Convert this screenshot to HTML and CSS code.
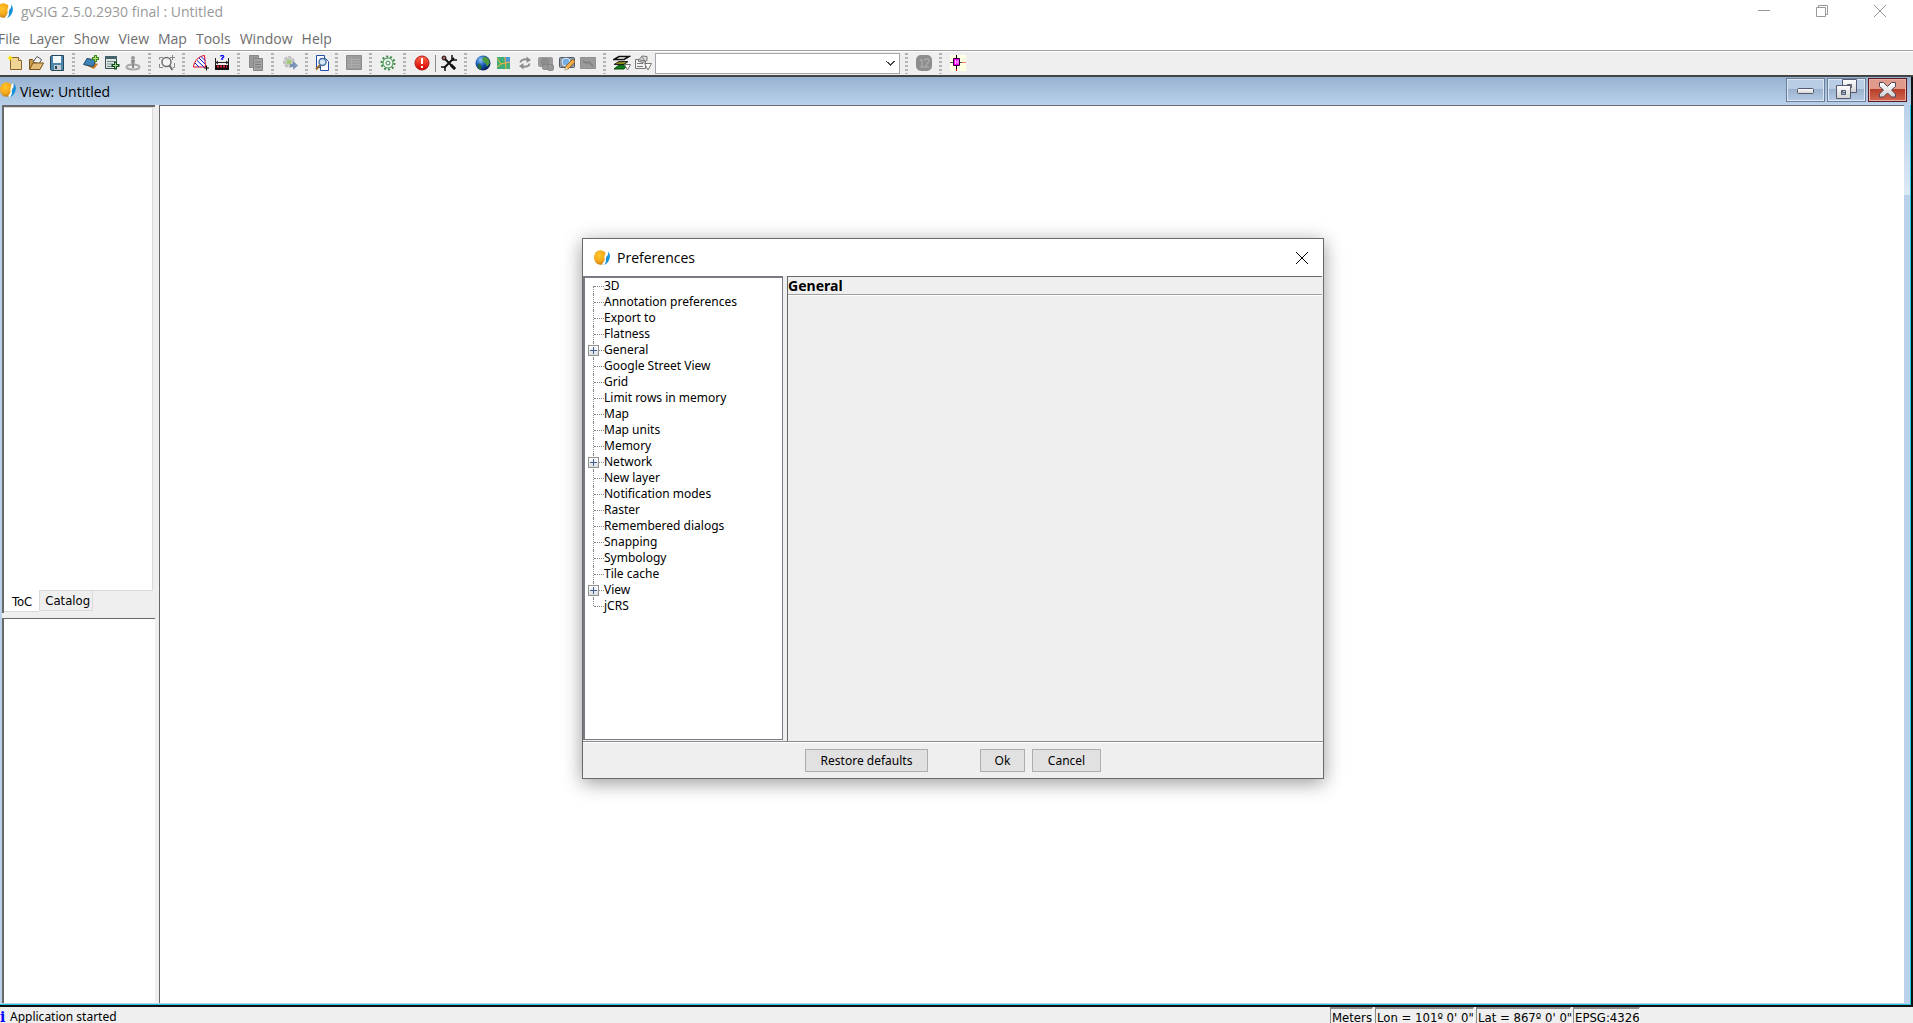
FILE: index.html
```html
<!DOCTYPE html>
<html lang="en">
<head>
<meta charset="utf-8">
<title>gvSIG 2.5.0.2930 final : Untitled</title>
<link rel="stylesheet" href="styles.css">
</head>
<body>
<svg class="defs" aria-hidden="true">
  <defs>
    <radialGradient id="sun" cx=".4" cy=".35" r=".7"><stop offset="0" stop-color="#ffc629"/><stop offset=".6" stop-color="#f5a81c"/><stop offset="1" stop-color="#b87412"/></radialGradient>
    <radialGradient id="sea" cx=".35" cy=".3" r=".8"><stop offset="0" stop-color="#8cc8f4"/><stop offset=".5" stop-color="#1450b4"/><stop offset="1" stop-color="#031442"/></radialGradient>
    <linearGradient id="red" x1="0" y1="0" x2="0" y2="1"><stop offset="0" stop-color="#ff6a4a"/><stop offset="1" stop-color="#d40000"/></linearGradient>
    <linearGradient id="glyph" x1="0" y1="0" x2="0" y2="1"><stop offset="0" stop-color="#fff"/><stop offset="1" stop-color="#d2d2d2"/></linearGradient>
    <symbol id="logo" viewBox="0 0 16 16"><ellipse cx="6.500" cy="7.500" rx="6.500" ry="7.300" fill="url(#sun)"/><path d="M12 2c1.500 2-1.500 4-.5 6.500.8 2-.8 4-2.500 6" fill="none" stroke="#fff" stroke-width="2"/><path d="M14 1.500c2.500 2.500 2.300 6 .8 9-1 2-2.500 3.500-4.800 4.500 2.200-2.300 2-4 1.800-5.800C11.500 7 15.200 5 14 1.500z" fill="#1592dc"/></symbol>
  </defs>
</svg>

<header class="titlebar">
  <svg class="app-logo" viewBox="0 0 16 16"><use href="#logo"/></svg>
  <h1 class="app-title">gvSIG 2.5.0.2930 final : Untitled</h1>
  <button class="os-btn" aria-label="Minimize"><svg viewBox="0 0 12 12"><path d="M0 5.500h12"/></svg></button>
  <button class="os-btn" aria-label="Restore"><svg viewBox="0 0 12 12"><path d="M.5 2.500h9v9h-9zM2.500 2.500v-2h9v9h-2"/></svg></button>
  <button class="os-btn" aria-label="Close"><svg viewBox="0 0 12 12"><path d="M0 0l12 12M12 0L0 12"/></svg></button>
</header>

<nav class="menubar">
  <button>File</button><button>Layer</button><button>Show</button><button>View</button><button>Map</button><button>Tools</button><button>Window</button><button>Help</button>
</nav>

<div class="toolbar">
  <button class="tool" aria-label="New"><svg viewBox="0 0 16 16"><path d="M3.500 2.500h8l3 3v9h-11z" fill="#f0d494" stroke="#8a6428"/><path d="M11.500 2.500v3h3" fill="#fff" stroke="#8a6428"/><path d="M3 0l1 2 2 1-2 1-1 2-1-2-2-1 2-1z" fill="#ffe300"/></svg></button>
  <button class="tool" aria-label="Open"><svg viewBox="0 0 16 16"><path d="M1.500 14V4.500h3l1 1h4V13z" fill="#c79a50" stroke="#7a5418"/><path d="M5 7l4-5.500 4.500 3L11 9z" fill="#f4f4f4" stroke="#555"/><path d="M1.500 14.500L5 8h10.500L12 14.500z" fill="#e3bd78" stroke="#7a5418"/></svg></button>
  <button class="tool" aria-label="Save"><svg viewBox="0 0 16 16"><path d="M2.500.5h12v15h-12l-1-1v-13z" fill="#4a86ac" stroke="#26465c"/><path d="M4 1h8v7H4z" fill="#f4f8fa"/><path d="M5 10h7v5H5z" fill="#c9ced2"/><path d="M6 11h2v3H6z" fill="#26465c"/></svg></button>
  <i class="grip"></i>
  <button class="tool" aria-label="Add layer"><svg viewBox="0 0 16 16"><path d="M2 10l9 4 4-5-9-3z" fill="#c27a22"/><path d="M.5 9.500L4 3.500l9 1.500-3 6.500z" fill="#3e84b8" stroke="#1d4768"/><path d="M12.500 0v7M9 3.500h7" stroke="#3a8a1c" stroke-width="3"/><path d="M12.500 1v5M10 3.500h5" stroke="#b6e07c"/></svg></button>
  <button class="tool" aria-label="Add table"><svg viewBox="0 0 16 16"><path d="M1.500 1.500h11v12h-11z" fill="#dde6e2" stroke="#3a4c50"/><path d="M1 1h12v3H1z" fill="#45646c"/><path d="M3 6.500h8M3 9h6M3 11.500h5" stroke="#6e8c88"/><path d="M11.500 6.500v8M7.500 10.500h8" stroke="#184c20" stroke-width="3"/><path d="M11.500 8v5M9 10.500h5" stroke="#9cdc98"/></svg></button>
  <button class="tool" aria-label="Add event layer" disabled><svg viewBox="0 0 16 16"><circle cx="8" cy="3" r="2" fill="#999"/><path d="M6 5h4l-1 6H7z" fill="#8a8a8a"/><ellipse cx="8" cy="12" rx="6.500" ry="2.500" fill="none" stroke="#aaa" stroke-width="2"/><path d="M7 9h2v4H7z" fill="#888"/></svg></button>
  <i class="grip"></i>
  <button class="tool" aria-label="Zoom"><svg viewBox="0 0 16 16"><path d="M.5 4.500v-2H4M.5 9v3.500H4M15.500 8v4.500H14" stroke="#888" fill="none"/><circle cx="7.500" cy="7" r="4.500" fill="#f4f4f4" stroke="#707070" stroke-width="1.500"/><path d="M10.500 10.500l3 4.500" stroke="#707070" stroke-width="2"/><path d="M13.500 0v5M11 2.500h5" stroke="#888"/></svg></button>
  <i class="grip"></i>
  <button class="tool" aria-label="Measure area"><svg viewBox="0 0 16 16"><path d="M.5 12C1 6 6 1 11.500.5L12.500 12z" fill="#fff" stroke="#e00020"/><path d="M2 8l4 4M4 5.500l7 6.500M6 3l6 6M8 1.500l4 4" stroke="#1414d8"/><path d="M13.500 10.500v5M11 13h5" stroke="#000"/></svg></button>
  <button class="tool" aria-label="Measure distance"><svg viewBox="0 0 16 16"><path d="M1.500 3v7M14.500 3v7M2 7.500h12" stroke="#222"/><path d="M4 6L2 7.500 4 9M12 6l2 1.500-2 1.500" stroke="#222" fill="none"/><path d="M6.500 1.500c1-2 3.500-1 3 .5L8 3.500V5" stroke="#1414ff" fill="none" stroke-width="1.500"/><path d="M1 10h14v5H1z" fill="#111"/><path d="M3 11.500h10" stroke="#f02030" stroke-width="2" stroke-dasharray="2 1"/></svg></button>
  <i class="grip"></i>
  <button class="tool" aria-label="Copy" disabled><svg viewBox="0 0 16 16"><path d="M1.500.5h9v12h-9z" fill="#999" stroke="#8a8a8a"/><path d="M5.500 3.500h9v12h-9z" fill="#a4a4a4" stroke="#858585"/><path d="M7 7h6M7 9.500h6M7 12h6" stroke="#7c7c7c"/></svg></button>
  <i class="grip"></i>
  <button class="tool" aria-label="Geoprocess"><svg viewBox="0 0 16 16"><circle cx="7" cy="7" r="4.500" fill="#d4d6d4" stroke="#c0c0c0" stroke-width="3" stroke-dasharray="3 1"/><circle cx="7" cy="7" r="2.500" fill="#a2c878"/><path d="M8 9h3V6l5 4.500-5 4.500v-3H8z" fill="#6b86b4" opacity=".85"/></svg></button>
  <i class="grip"></i>
  <button class="tool narrow" aria-label="Find"><svg viewBox="0 0 16 16"><path d="M2.500.5h8v12h-8z" fill="#fff" stroke="#1f4fa8"/><path d="M6.500 3.500h5l3 3v9h-8z" fill="#fff" stroke="#1f4fa8"/><circle cx="8.500" cy="7" r="3.500" fill="#d6e8f8" stroke="#4c74a4" stroke-width="1.500"/><path d="M6 10l-4 4.500" stroke="#9a6a30" stroke-width="2"/></svg></button>
  <i class="grip"></i>
  <button class="tool" aria-label="Table" disabled><svg viewBox="0 0 16 16"><path d="M.5.500h15v14H.5z" fill="#9c9c9c" stroke="#8c8c8c"/><path d="M2 4.500h12M2 7h12M2 9.500h12M2 12h12M5.500 3v10" stroke="#acacac"/></svg></button>
  <i class="grip"></i>
  <button class="tool" aria-label="Toolbox"><svg viewBox="0 0 16 16"><circle cx="8" cy="8" r="6.500" fill="none" stroke="#3a8b46" stroke-width="2" stroke-dasharray="2 2"/><circle cx="8" cy="8" r="5" fill="#f2f6f2" stroke="#3a8b46"/><circle cx="8" cy="8" r="2" fill="none" stroke="#3a8b46"/></svg></button>
  <i class="grip"></i>
  <button class="tool" aria-label="Errors"><svg viewBox="0 0 16 16"><circle cx="8" cy="8" r="7" fill="url(#red)" stroke="#b01818"/><path d="M8 3v6M8 11v2" stroke="#fff" stroke-width="2"/></svg></button>
  <i class="divider"></i>
  <button class="tool" aria-label="Tools"><svg viewBox="0 0 16 16"><path d="M3 3l11 11M13 3L3 13" stroke="#111" stroke-width="2"/><path d="M11 0v4l1 1h4M0 12h3l1 1v3" stroke="#111" fill="none" stroke-width="1.500"/><circle cx="3" cy="3" r="2" fill="#b06068" stroke="#111"/><path d="M10 10l4 4" stroke="#111" stroke-width="3"/></svg></button>
  <i class="grip"></i>
  <button class="tool" aria-label="Globe"><svg viewBox="0 0 16 16"><circle cx="8" cy="8" r="7.500" fill="url(#sea)"/><path d="M9 1.500c4 .5 6 4 5.500 7l-2 3c-2-1-1-3-3-4s-1-2-2.500-3z" fill="#4c9a38"/><path d="M3 8l4 3-1 4c-3-1-4-4-3-7z" fill="#2c6c3c"/></svg></button>
  <button class="tool" aria-label="Map"><svg viewBox="0 0 16 16"><path d="M1 2h13v12H1z" fill="#3fae78"/><path d="M8 2h6v6L9 9z" fill="#4c98d0"/><path d="M1 3l4 6-4 3M5 9l9-2M9 2l1 12" stroke="#f5b53c" fill="none"/></svg></button>
  <button class="tool" aria-label="Refresh" disabled><svg viewBox="0 0 16 16"><path d="M3.500 7.500c0-2.500 3-3.500 7-3M12.500 8.500c0 2.500-3 3.500-7 3" fill="none" stroke="#8e8e8e" stroke-width="2"/><path d="M9.500 1.500L14 5l-4.500 3zM6.500 8L2 11l4.500 3.500z" fill="#8e8e8e"/></svg></button>
  <button class="tool" aria-label="Link" disabled><svg viewBox="0 0 16 16"><rect x="0" y="2" width="15" height="10" rx="2" fill="#9a9a9a"/><circle cx="7" cy="7" r="4" fill="#8c8c8c"/><rect x="4.500" y="9.500" width="6" height="5" rx="2" fill="#999" stroke="#828282"/><rect x="9.500" y="9.500" width="6" height="6" rx="2" fill="#999" stroke="#828282"/></svg></button>
  <button class="tool" aria-label="Edit picture"><svg viewBox="0 0 16 16"><rect x=".5" y="2.500" width="15" height="10" rx="1" fill="#8c98a4" stroke="#505a64"/><circle cx="7" cy="7" r="4" fill="#74aee4" stroke="#dce8f4"/><path d="M6 15l1-4 7-7 2 3-7 7z" fill="#f2b04c" stroke="#a06a20"/><path d="M6 15l1-3 2 2z" fill="#eee"/></svg></button>
  <button class="tool" aria-label="Picture" disabled><svg viewBox="0 0 16 16"><path d="M.5 2.500h15v11H.5z" fill="#9a9a9a" stroke="#909090"/><path d="M3 6l3 2 3-1 4 4" stroke="#7c7c7c" fill="none" stroke-width="1.500"/></svg></button>
  <i class="grip"></i>
  <button class="tool wide" aria-label="Layers"><svg viewBox="0 0 18 16"><path d="M1 14l5-4h9l-4 4z" fill="#0c7a18" stroke="#064a0c"/><path d="M1 9.500l5-3h9l-4 3z" fill="#8a8a18" stroke="#222"/><path d="M1 4.500l5-3h10l-5 3z" fill="#fff" stroke="#111" stroke-width="1.500"/><path d="M11.500 9.500h6L14.500 15z" fill="#fff" stroke="#777"/></svg></button>
  <button class="tool wide" aria-label="Layer properties"><svg viewBox="0 0 18 16"><path d="M1.500 4.500h10v9h-10z" fill="#f4f4f4" stroke="#777"/><path d="M3 8.500h6M3 11.500h6M4 6l4-5 5 .5v4l-4 2z" stroke="#777" fill="#ddd"/><path d="M6 5l5 1M8 2l3 4" stroke="#777"/><path d="M10.500 8.500h7L14 15z" fill="#fff" stroke="#777"/></svg></button>
  <select class="combo" aria-label="Active layer"><option></option></select>
  <i class="grip"></i>
  <button class="tool" aria-label="Information" disabled><svg viewBox="0 0 16 16"><rect width="16" height="16" rx="5" fill="#8d8d8d"/><path d="M4 5h2v7M4 12h4M9 6c0-3 4-3 4 0l-4 6h4" stroke="#a8a8a8" fill="none" stroke-width="1.500"/></svg></button>
  <i class="grip"></i>
  <button class="tool" aria-label="Center on point"><svg viewBox="0 0 16 16"><path d="M0 0h16v16H0z" fill="#ffffe1"/><path d="M6.500 0v14" stroke="#000"/><path d="M6.500 14v2" stroke="#d00"/><path d="M0 7.500h12" stroke="#555"/><path d="M12 7.500h4" stroke="#e88070"/><path d="M3.500 3.500h6v7h-6z" fill="#f0f" stroke="#303"/><path d="M5.500 5v4M8 5v4M5.500 7H8" stroke="#fbf"/></svg></button>
</div>

<main class="frame">
  <div class="frame-title">
    <svg class="app-logo" viewBox="0 0 16 16"><use href="#logo"/></svg>
    <h2>View: Untitled</h2>
    <button class="mdi" aria-label="Minimize view"><svg viewBox="0 0 39 24"><rect x="11.500" y="10.500" width="16" height="5" rx="1" fill="url(#glyph)" stroke="#555a70"/></svg></button>
    <button class="mdi" aria-label="Restore view"><svg viewBox="0 0 39 24"><path d="M15.500 1.500h14v13h-14zM20.500 6.500v3h4v-3z" fill="url(#glyph)" stroke="#555a70" fill-rule="evenodd"/><path d="M9.500 7.500h14v13h-14zM14.500 12.500v4h4v-4z" fill="url(#glyph)" stroke="#555a70" fill-rule="evenodd"/></svg></button>
    <button class="mdi close" aria-label="Close view"><svg viewBox="0 0 39 24"><path d="M11.500 4.500h4l4 4 4-4h4v4l-4 3.500 4 4v3h-4l-4-4-4 4h-4v-3l4-4-4-3.500z" fill="url(#glyph)" stroke="#50465a"/></svg></button>
  </div>
  <div class="frame-body">
    <aside class="side">
      <section class="toc">
        <div class="toc-pane"></div>
        <div class="tabs"><button class="tab active">ToC</button><button class="tab">Catalog</button></div>
      </section>
      <section class="locator"></section>
    </aside>
    <section class="map"></section>
  </div>
</main>

<footer class="status">
  <b class="info">i</b>
  <span class="message">Application started</span>
  <span class="cell units">Meters</span>
  <span class="cell lon">Lon = 101º 0' 0"</span>
  <span class="cell lat">Lat = 867º 0' 0"</span>
  <span class="cell epsg">EPSG:4326</span>
</footer>

<section class="dialog" role="dialog" aria-labelledby="dlg-title">
  <div class="dialog-title">
    <svg class="app-logo" viewBox="0 0 16 16"><use href="#logo"/></svg>
    <h2 id="dlg-title">Preferences</h2>
    <button class="dialog-close" aria-label="Close"><svg viewBox="0 0 12 12"><path d="M0 0l12 12M12 0L0 12"/></svg></button>
  </div>
  <div class="dialog-body">
    <ul class="tree">
      <li>3D</li>
      <li>Annotation preferences</li>
      <li>Export to</li>
      <li>Flatness</li>
      <li><button class="expand" aria-label="Expand General"></button>General</li>
      <li>Google Street View</li>
      <li>Grid</li>
      <li>Limit rows in memory</li>
      <li>Map</li>
      <li>Map units</li>
      <li>Memory</li>
      <li><button class="expand" aria-label="Expand Network"></button>Network</li>
      <li>New layer</li>
      <li>Notification modes</li>
      <li>Raster</li>
      <li>Remembered dialogs</li>
      <li>Snapping</li>
      <li>Symbology</li>
      <li>Tile cache</li>
      <li><button class="expand" aria-label="Expand View"></button>View</li>
      <li>jCRS</li>
    </ul>
    <div class="page"><h3>General</h3></div>
  </div>
  <div class="actions">
    <button class="push restore">Restore defaults</button>
    <button class="push ok">Ok</button>
    <button class="push cancel">Cancel</button>
  </div>
</section>
</body>
</html>
```
FILE: styles.css
```css
* { box-sizing: border-box; }
body {
  margin: 0;
  height: 100vh;
  overflow: hidden;
  display: flex;
  flex-direction: column;
  position: relative;
  background: #fff;
  color: #000;
  font: 12px/16px "Noto Sans", sans-serif;
}
h1, h2, h3, ul { margin: 0; padding: 0; font-weight: normal; }
button { font: inherit; color: inherit; padding: 0; margin: 0; border: 0; background: none; }
svg { display: block; }
.defs { position: absolute; width: 0; height: 0; }
.app-logo { width: 16px; height: 16px; flex: none; }

.titlebar { display: flex; align-items: flex-start; height: 24px; padding-right: 4px; color: #999; flex: none; }
.titlebar .app-logo { margin: 3px 8px 0 -3px; }
.app-title { flex: 1; font: 14px/24px "Open Sans", sans-serif; }
.os-btn { width: 58px; height: 22px; display: grid; place-items: center; }
.os-btn svg { width: 12px; height: 12px; fill: none; stroke: #999; }

.menubar { display: flex; gap: 9px; height: 26px; margin-left: -2px; padding-top: 3px; flex: none; color: #6d6d6d; font: 14px/24px "Open Sans", sans-serif; }

.toolbar { display: flex; align-items: center; height: 27px; padding-left: 4px; flex: none; background: #efefef; border-top: 1px solid #a0a0a0; border-bottom: 2px solid #444; box-shadow: inset 0 1px #fff; }
.tool { width: 21px; height: 22px; display: grid; place-items: center; flex: none; }
.tool.narrow { width: 17px; }
.tool svg { width: 16px; height: 16px; }
.tool.wide svg { width: 18px; }
.grip { width: 3px; height: 21px; margin: 0 5px; background: repeating-linear-gradient(#b4b4b4 0 2px, transparent 2px 4px); flex: none; }
.divider { width: 1px; height: 17px; margin: 0 2px 0 3px; background: #888; flex: none; }
.combo {
  appearance: none;
  width: 245px;
  height: 21px;
  margin-left: 2px;
  border: 1px solid #a5a5ad;
  border-radius: 0;
  background-color: #fff;
  background-image: linear-gradient(45deg, transparent 44%, #444 44% 60%, transparent 60%), linear-gradient(-45deg, transparent 44%, #444 44% 60%, transparent 60%);
  background-size: 5px 5px;
  background-repeat: no-repeat;
  background-position: right 8px center, right 4px center;
}

.frame { flex: 1; min-height: 0; display: flex; flex-direction: column; background: linear-gradient(#b9d1ea, #dce9f6) right 1px top 28px / 6px 90px no-repeat #b9d1ea; border-right: 2px solid #111; border-bottom: 2px solid #111; box-shadow: inset -1px -1px #20c8e0; }
.frame-title { display: flex; height: 28px; padding-right: 4px; background: linear-gradient(#97b2d0, #b9d1ea); flex: none; }
.frame-title .app-logo { margin: 5px 4px 0 0; }
.frame-title h2 { flex: 1; font: 14px/30px "Open Sans", sans-serif; }
.mdi { width: 39px; height: 24px; margin: 1px 0 0 2px; border: 1px solid #6d7f98; box-shadow: inset 0 0 0 1px #dbe7f4; background: linear-gradient(#b9cee5 45%, #9ab1cd 45%, #b5cbe5); }
.mdi svg { width: 39px; height: 24px; margin: -1px; }
.mdi.close { border-color: #5a1820; box-shadow: inset 0 0 0 1px #eeb0a4; background: linear-gradient(#e09a8c 45%, #b83c28 45%, #cf6850); }
.frame-body { flex: 1; min-height: 0; display: flex; gap: 4px; margin: 0 7px 2px 2px; background: #efefef; }
.side { width: 153px; display: flex; flex-direction: column; gap: 5px; }
.toc { height: 508px; padding: 0 2px 0 0; display: flex; flex-direction: column; border-left: 2px solid #696969; border-top: 2px solid #696969; }
.toc-pane { flex: 1; background: #fff; border: 1px solid #dadada; border-left: 0; }
.tabs { display: flex; align-items: flex-start; height: 22px; }
.tab { height: 20px; padding: 0 2px 0 5px; border: 1px solid #dadada; border-top: 0; font: 13px/18px "DejaVu Sans Condensed", sans-serif; }
.tab.active { height: 22px; padding: 3px 7px 0 8px; margin-top: -1px; background: #fff; border-width: 0 0 1px; }
.locator { flex: 1; background: #fff; border-left: 2px solid #696969; border-top: 1px solid #696969; }
.map { flex: 1; background: #fff; border-left: 1px solid #696969; border-top: 1px solid #696969; }

.status { display: flex; height: 16px; overflow: hidden; gap: 2px; padding-right: 273px; background: #efefef; flex: none; line-height: 20px; }
.info { width: 6px; color: #00f; font: bold 14px/20px "DejaVu Serif", serif; }
.message { flex: 1; margin-left: 2px; }
.cell { padding-left: 1px; border: 2px solid #8a8a8a; border-right: 1px solid #fff; border-left-width: 1px; border-bottom: 0; font: 13px/17px "DejaVu Sans Condensed", sans-serif; white-space: nowrap; }
.units { width: 43px; }
.lon { width: 99px; }
.lat { width: 95px; }
.epsg { width: 67px; }

.dialog { position: absolute; left: 582px; top: 238px; width: 742px; height: 541px; display: flex; flex-direction: column; background: #efefef; border: 1px solid #6a6a6a; box-shadow: 0 4px 18px rgba(0, 0, 0, .4); }
.dialog-title { display: flex; align-items: center; height: 37px; padding: 0 15px 0 11px; background: #fff; flex: none; }
.dialog-title h2 { flex: 1; margin-left: 7px; font: 14px/20px "Open Sans", sans-serif; }
.dialog-close { width: 12px; height: 12px; }
.dialog-close svg { width: 12px; height: 12px; stroke: #000; }
.dialog-body { flex: 1; display: flex; gap: 4px; min-height: 0; }
.tree { width: 200px; padding: 0 0 0 9px; background: #fff; border: 1px solid #7a7a84; border-width: 2px 1px 1px 2px; list-style: none; margin-bottom: 1px; }
.tree li { position: relative; height: 16px; padding-left: 10px; white-space: nowrap; }
.tree li::before { content: ""; position: absolute; left: -1px; top: 0; height: 16px; border-left: 1px dotted #888; }
.tree li:first-child::before { top: 8px; height: 8px; }
.tree li:last-child::before { height: 8px; }
.tree li::after { content: ""; position: absolute; left: 0; top: 8px; width: 10px; border-top: 1px dotted #888; }
.expand { position: absolute; z-index: 1; left: -6px; top: 3px; width: 11px; height: 11px; border: 1px solid #919191; background: linear-gradient(#3b5a9c, #3b5a9c) center / 7px 1px no-repeat, linear-gradient(#3b5a9c, #3b5a9c) center / 1px 7px no-repeat, linear-gradient(#fff, #ddd); }
.page { flex: 1; margin-right: 1px; border-left: 1px solid #696969; border-top: 1px solid #696969; }
.page h3 { height: 18px; font-weight: bold; line-height: 18px; border-bottom: 1px solid #a0a0a0; box-shadow: 0 1px #fff; }
.actions { display: flex; justify-content: center; height: 37px; padding-top: 7px; border-top: 1px solid #8c8c8c; box-shadow: inset 0 1px #fff; flex: none; }
.push { height: 23px; border: 1px solid #adadad; background: #e1e1e1; }
.restore { width: 123px; margin-right: 52px; }
.ok { width: 45px; margin-right: 7px; }
.cancel { width: 69px; }
```
